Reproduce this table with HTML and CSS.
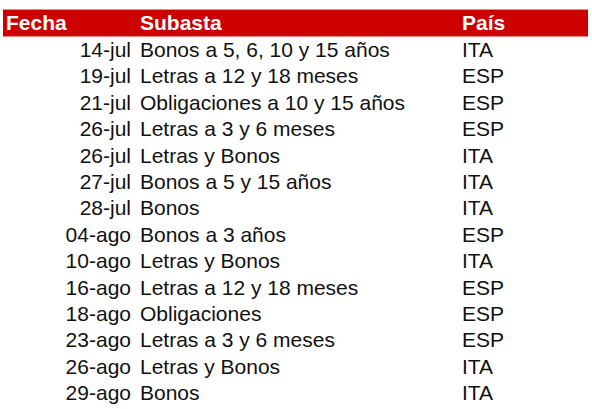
FILE: index.html
```html
<!DOCTYPE html>
<html lang="es">
<head>
<meta charset="utf-8">
<link rel="stylesheet" href="styles.css">
</head>
<body>
<div class="table">
  <div class="row head">
    <div class="c fecha">Fecha</div>
    <div class="c sub">Subasta</div>
    <div class="c pais">País</div>
  </div>
  <div class="row"><div class="c fecha">14-jul</div><div class="c sub">Bonos a 5, 6, 10 y 15 años</div><div class="c pais">ITA</div></div>
  <div class="row"><div class="c fecha">19-jul</div><div class="c sub">Letras a 12 y 18 meses</div><div class="c pais">ESP</div></div>
  <div class="row"><div class="c fecha">21-jul</div><div class="c sub">Obligaciones a 10 y 15 años</div><div class="c pais">ESP</div></div>
  <div class="row"><div class="c fecha">26-jul</div><div class="c sub">Letras a 3 y 6 meses</div><div class="c pais">ESP</div></div>
  <div class="row"><div class="c fecha">26-jul</div><div class="c sub">Letras y Bonos</div><div class="c pais">ITA</div></div>
  <div class="row"><div class="c fecha">27-jul</div><div class="c sub">Bonos a 5 y 15 años</div><div class="c pais">ITA</div></div>
  <div class="row"><div class="c fecha">28-jul</div><div class="c sub">Bonos</div><div class="c pais">ITA</div></div>
  <div class="row"><div class="c fecha">04-ago</div><div class="c sub">Bonos a 3 años</div><div class="c pais">ESP</div></div>
  <div class="row"><div class="c fecha">10-ago</div><div class="c sub">Letras y Bonos</div><div class="c pais">ITA</div></div>
  <div class="row"><div class="c fecha">16-ago</div><div class="c sub">Letras a 12 y 18 meses</div><div class="c pais">ESP</div></div>
  <div class="row"><div class="c fecha">18-ago</div><div class="c sub">Obligaciones</div><div class="c pais">ESP</div></div>
  <div class="row"><div class="c fecha">23-ago</div><div class="c sub">Letras a 3 y 6 meses</div><div class="c pais">ESP</div></div>
  <div class="row"><div class="c fecha">26-ago</div><div class="c sub">Letras y Bonos</div><div class="c pais">ITA</div></div>
  <div class="row"><div class="c fecha">29-ago</div><div class="c sub">Bonos</div><div class="c pais">ITA</div></div>
</div>
</body>
</html>
```
FILE: styles.css
```css
html, body {
  margin: 0;
  padding: 0;
  background: #ffffff;
}
body {
  font-family: "Liberation Sans", Arial, sans-serif;
  color: #111111;
}
.table {
  margin: 10px 4px 0 3px;
}
.row {
  display: grid;
  grid-template-columns: 131px 328px 1fr;
  height: 26.4px;
  align-items: center;
  font-size: 21px;
  line-height: 26px;
  padding-top: 1px;
  box-sizing: border-box;
}
.row .fecha {
  text-align: right;
  padding-right: 3px;
}
.row .sub {
  padding-left: 6px;
}
.row.head {
  background: #cc0000;
  color: #ffffff;
  font-weight: bold;
  font-size: 21px;
  height: 26px;
  padding-top: 0;
  box-shadow: 0 1px 0 #e88a8a, 0 -1px 0 #e88a8a;
}
.row.head .fecha {
  text-align: left;
  padding-left: 3px;
  padding-right: 0;
}
```
